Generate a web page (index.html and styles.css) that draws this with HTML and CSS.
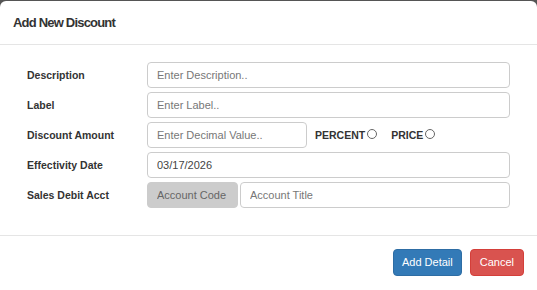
FILE: index.html
```html
<!DOCTYPE html>
<html>
<head>
<meta charset="utf-8">
<link rel="stylesheet" href="styles.css">
</head>
<body>
<div class="modal">
  <div class="modal-header">
    <h4 class="modal-title">Add New Discount</h4>
  </div>
  <div class="modal-body">
    <div class="form-row">
      <label class="lbl">Description</label>
      <input class="field" type="text" placeholder="Enter Description..">
    </div>
    <div class="form-row">
      <label class="lbl">Label</label>
      <input class="field" type="text" placeholder="Enter Label..">
    </div>
    <div class="form-row">
      <label class="lbl">Discount Amount</label>
      <div class="amount">
        <input class="field amount-field" type="text" placeholder="Enter Decimal Value..">
        <span class="opt">PERCENT</span><input class="radio" type="radio" name="dtype">
        <span class="opt opt-gap">PRICE</span><input class="radio" type="radio" name="dtype">
      </div>
    </div>
    <div class="form-row">
      <label class="lbl">Effectivity Date</label>
      <input class="field field-value" type="text" value="03/17/2026">
    </div>
    <div class="form-row">
      <label class="lbl">Sales Debit Acct</label>
      <div class="acct">
        <input class="field addon" type="text" placeholder="Account Code" disabled>
        <input class="field" type="text" placeholder="Account Title">
      </div>
    </div>
  </div>
  <div class="modal-footer">
    <button class="btn btn-primary">Add Detail</button>
    <button class="btn btn-danger">Cancel</button>
  </div>
</div>
</body>
</html>
```

FILE: styles.css
```css
* { box-sizing: border-box; }
html, body {
  margin: 0;
  padding: 0;
  background: #555;
  height: 290px;
  overflow: hidden;
  font-family: "Liberation Sans", Arial, sans-serif;
  color: #333;
}
.modal {
  margin-top: 1px;
  background: #fff;
  border-radius: 6px;
  height: 295px;
  overflow: hidden;
}
.modal-header {
  padding: 13px 13px 12px;
  border-bottom: 1px solid #e5e5e5;
}
.modal-title {
  margin: 0;
  font-size: 13px;
  line-height: 18px;
  font-weight: bold;
  letter-spacing: -0.8px;
  color: #333;
}
.modal-body {
  padding: 17px 27px 27px;
  display: flex;
  flex-direction: column;
  gap: 4px;
}
.form-row {
  display: grid;
  grid-template-columns: 120px 1fr;
  align-items: center;
  height: 26px;
}
.lbl {
  font-size: 10.5px;
  font-weight: bold;
  color: #333;
}
.field {
  height: 26px;
  width: 100%;
  border: 1px solid #ccc;
  border-radius: 4px;
  padding: 0 9px;
  font-family: "Liberation Sans", Arial, sans-serif;
  font-size: 11px;
  color: #555;
  background: #fff;
  outline: none;
}
.field::placeholder { color: #777; opacity: 1; }
.field-value { color: #444; }
.amount {
  display: flex;
  align-items: center;
}
.amount-field {
  width: 160px;
  flex: none;
}
.opt {
  font-size: 10.5px;
  font-weight: bold;
  color: #333;
  margin-left: 8px;
}
.opt-gap { margin-left: 14px; }
.radio {
  -webkit-appearance: none;
  appearance: none;
  width: 10px;
  height: 10px;
  margin: 0 0 3px 2px;
  border: 1px solid #666;
  border-radius: 50%;
  background: #fff;
}
.acct {
  display: flex;
  gap: 2px;
}
.addon {
  width: 91px;
  flex: none;
  background: #ccc;
  border-color: #ccc;
}
.addon::placeholder { color: #666; }
.modal-footer {
  border-top: 1px solid #e5e5e5;
  padding: 13px 13px 0;
  display: flex;
  justify-content: flex-end;
  gap: 8px;
}
.btn {
  font-family: "Liberation Sans", Arial, sans-serif;
  font-size: 11px;
  line-height: 15px;
  padding: 5px 9px;
  border: 1px solid transparent;
  border-radius: 4px;
  color: #fff;
}
.btn-primary {
  background: #337ab7;
  border-color: #2e6da4;
  padding: 5px 8px;
}
.btn-danger {
  background: #d9534f;
  border-color: #d43f3a;
}
```
